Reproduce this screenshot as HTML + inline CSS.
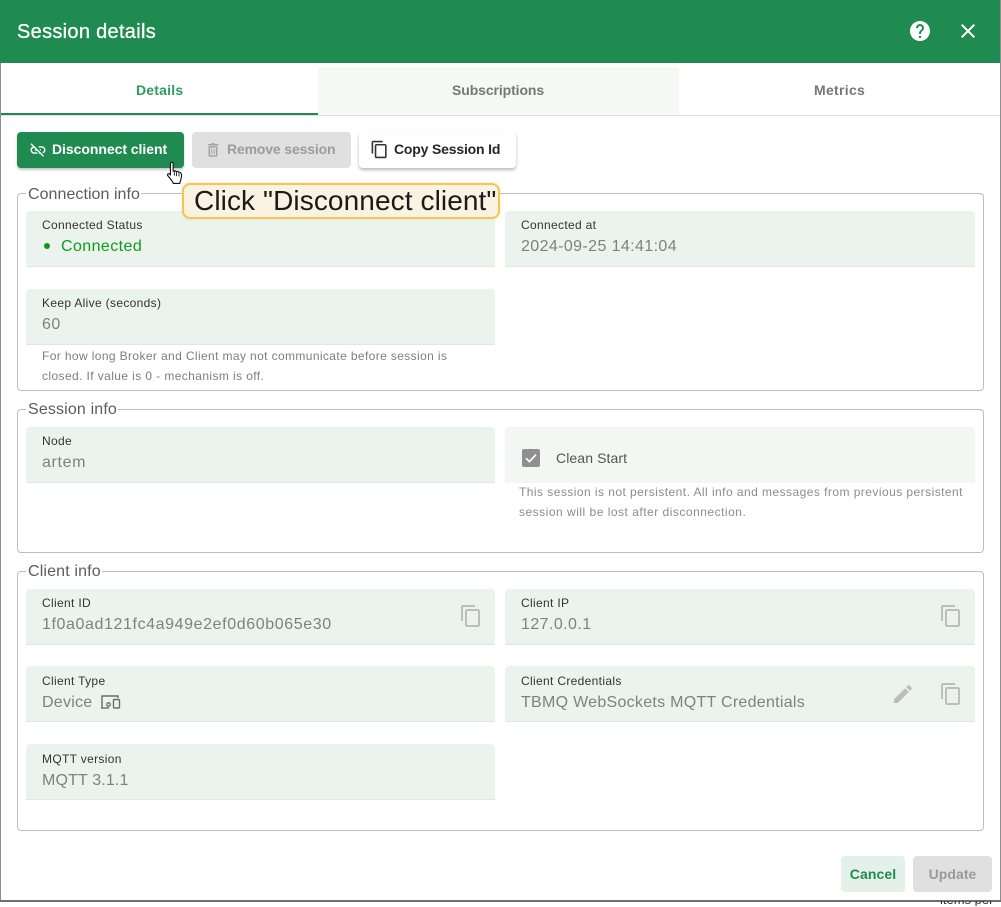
<!DOCTYPE html>
<html><head><meta charset="utf-8"><style>
*{box-sizing:border-box}
html,body{margin:0;padding:0;width:1001px;height:902px;overflow:hidden;background:#fff;font-family:"Liberation Sans",sans-serif}
.a{position:absolute}
.t{position:absolute;white-space:nowrap;line-height:1}
.box{position:absolute;border:1px solid #bdbdbd;border-radius:4px}
.leg{position:absolute;background:#fff;color:#5c5c5c;font-size:16px;line-height:18px;padding:0 1px 0 2px;white-space:nowrap}
.f{position:absolute;background:#ebf3ee;border-bottom:1px solid #dfe7e2;border-radius:4px 4px 0 0;height:56px}
.l{position:absolute;white-space:nowrap;font-size:12px;line-height:14px;color:#333;letter-spacing:.33px;margin-top:-1px}
.v{position:absolute;white-space:nowrap;font-size:16px;line-height:18px;color:#808080;letter-spacing:.45px;margin-top:1px}
.h{position:absolute;white-space:nowrap;font-size:12px;line-height:14px;color:#7e7e7e;letter-spacing:.42px}
.btn{position:absolute;border-radius:4px;height:36px;font-size:14px;font-weight:bold;line-height:36px;white-space:nowrap}
.btn span{top:-1px!important}
svg{position:absolute;display:block}
</style></head><body>
<div class="a" style="left:0;top:0;width:1001px;height:902px;background:#fff"></div>
<div class="a" style="left:0;top:0;width:1px;height:902px;background:#8e8e8e"></div>
<div class="a" style="left:1000px;top:0;width:1px;height:902px;background:#8e8e8e"></div>
<div class="a" style="left:0;top:900px;width:1001px;height:2px;background:#6f6f6f"></div>
<div class="t" style="left:940px;top:893px;font-size:13px;color:#333;clip-path:inset(8px 0 0 0)">items per</div>

<div class="a" style="left:0;top:0;width:1000px;height:63px;background:#208b50"></div>
<div class="t" style="left:17px;top:21px;font-size:20px;color:#fff;letter-spacing:.3px;line-height:22px;-webkit-text-stroke:.3px #fff">Session details</div>
<svg style="left:908px;top:19px" width="24" height="24" viewBox="0 0 24 24"><path fill="#fff" d="M12 2C6.48 2 2 6.48 2 12s4.48 10 10 10 10-4.48 10-10S17.52 2 12 2zm1 17h-2v-2h2v2zm2.07-7.75l-.9.92C13.45 12.9 13 13.5 13 15h-2v-.5c0-1.1.45-2.1 1.17-2.83l1.24-1.26c.37-.36.59-.86.59-1.41 0-1.1-.9-2-2-2s-2 .9-2 2H8c0-2.21 1.79-4 4-4s4 1.79 4 4c0 .88-.36 1.68-.93 2.25z"/></svg>
<svg style="left:956px;top:19px" width="24" height="24" viewBox="0 0 24 24"><path fill="#fff" d="M19 6.41L17.59 5 12 10.59 6.41 5 5 6.41 10.59 12 5 17.59 6.41 19 12 13.41 17.59 19 19 17.59 13.41 12z"/></svg>

<div class="a" style="left:318px;top:67px;width:361px;height:48px;background:#f4f9f6"></div>
<div class="a" style="left:1px;top:115px;width:999px;height:1px;background:#e0e0e0"></div>
<div class="a" style="left:1px;top:113px;width:317px;height:2px;background:#208b50"></div>
<div class="t" style="left:136px;top:83px;font-size:14px;font-weight:bold;color:#309a5f;letter-spacing:.2px">Details</div>
<div class="t" style="left:452px;top:83px;font-size:14px;font-weight:bold;color:#777;letter-spacing:-.1px">Subscriptions</div>
<div class="t" style="left:814px;top:83px;font-size:14px;font-weight:bold;color:#777;letter-spacing:.3px">Metrics</div>

<div class="btn" style="left:17px;top:132px;width:167px;background:#208b50;color:#fff;box-shadow:0 2px 2px rgba(0,0,0,.22)"><span class="a" style="left:35px;top:0;letter-spacing:-.05px">Disconnect client</span></div>
<svg style="left:29px;top:141px" width="18" height="18" viewBox="0 0 24 24"><path fill="#fff" d="M17 7h-4v1.9h4c1.71 0 3.1 1.39 3.1 3.1 0 1.43-.98 2.63-2.31 2.98l1.46 1.46C20.88 15.61 22 13.95 22 12c0-2.76-2.24-5-5-5zm-1 4h-2.19l2 2H16zM2 4.27l3.11 3.11C3.29 8.12 2 9.91 2 12c0 2.76 2.24 5 5 5h4v-1.9H7c-1.71 0-3.1-1.39-3.1-3.1 0-1.59 1.21-2.9 2.76-3.07L8.73 11H8v2h2.73L13 15.27V17h1.73l4.01 4L20 19.74 3.27 3 2 4.27z"/></svg>
<div class="btn" style="left:192px;top:132px;width:159px;background:#e0e0e0;color:#9c9c9c"><span class="a" style="left:35px;top:0;letter-spacing:-.15px">Remove session</span></div>
<svg style="left:204px;top:141px" width="18" height="18" viewBox="0 0 24 24"><path fill="#a3a3a3" d="M15 4l-1-1H10L9 4H5v2h14V4zM6 19c0 1.1.9 2 2 2h8c1.1 0 2-.9 2-2V7H6v12zm2-10h8v10H8V9zm1.500 1.500h1.500v7H9.500zm3.500 0h1.500v7H13z"/></svg>
<div class="btn" style="left:359px;top:132px;width:157px;background:#fff;color:#262626;box-shadow:0 2px 3px rgba(0,0,0,.28)"><span class="a" style="left:35px;top:0;letter-spacing:-.18px">Copy Session Id</span></div>
<svg style="left:370px;top:140px" width="19" height="19" viewBox="0 0 24 24"><path fill="#333" d="M16 1H4c-1.1 0-2 .9-2 2v14h2V3h12V1zm3 4H8c-1.1 0-2 .9-2 2v14c0 1.1.9 2 2 2h11c1.1 0 2-.9 2-2V7c0-1.1-.9-2-2-2zm0 16H8V7h11v14z"/></svg>

<div class="box" style="left:17px;top:193px;width:967px;height:198px"></div>
<div class="leg" style="left:26px;top:186px;letter-spacing:.05px">Connection info</div>
<div class="box" style="left:17px;top:409px;width:967px;height:144px"></div>
<div class="leg" style="left:26px;top:401px;letter-spacing:.15px">Session info</div>
<div class="box" style="left:17px;top:571px;width:967px;height:260px"></div>
<div class="leg" style="left:26px;top:563px;letter-spacing:.15px">Client info</div>

<div class="f" style="left:26px;top:211px;width:469px"></div>
<div class="l" style="left:42px;top:219px">Connected Status</div>
<div class="a" style="left:44px;top:243px;width:6px;height:6px;border-radius:50%;background:#0f9a16"></div>
<div class="v" style="left:61px;top:237px;color:#129a19;letter-spacing:.42px">Connected</div>
<div class="f" style="left:505px;top:211px;width:470px"></div>
<div class="l" style="left:521px;top:219px">Connected at</div>
<div class="v" style="left:521px;top:237px;letter-spacing:.39px">2024-09-25 14:41:04</div>
<div class="f" style="left:26px;top:289px;width:469px"></div>
<div class="l" style="left:42px;top:297px">Keep Alive (seconds)</div>
<div class="v" style="left:42px;top:315px">60</div>
<div class="h" style="left:42px;top:349px;letter-spacing:.38px">For how long Broker and Client may not communicate before session is</div>
<div class="h" style="left:42px;top:369px;letter-spacing:.4px">closed. If value is 0 - mechanism is off.</div>

<div class="f" style="left:26px;top:427px;width:469px"></div>
<div class="l" style="left:42px;top:435px">Node</div>
<div class="v" style="left:42px;top:453px;letter-spacing:.65px">artem</div>
<div class="a" style="left:505px;top:427px;width:470px;height:56px;background:#f2f7f4;border-radius:4px 4px 0 0"></div>
<div class="a" style="left:522px;top:449px;width:18px;height:18px;background:#8f8f8f;border-radius:2px"></div>
<svg style="left:522px;top:449px" width="18" height="18" viewBox="0 0 18 18"><path d="M4 9.200l3.400 3.400L14 5.600" fill="none" stroke="#fff" stroke-width="1.7"/></svg>
<div class="t" style="left:556px;top:450px;font-size:14px;line-height:16px;color:#555;letter-spacing:.1px">Clean Start</div>
<div class="h" style="left:519px;top:485px;letter-spacing:.45px;color:#8c8c8c">This session is not persistent. All info and messages from previous persistent</div>
<div class="h" style="left:519px;top:505px;letter-spacing:.5px;color:#8c8c8c">session will be lost after disconnection.</div>

<div class="f" style="left:26px;top:589px;width:469px"></div>
<div class="l" style="left:42px;top:597px">Client ID</div>
<div class="v" style="left:42px;top:615px;letter-spacing:.6px">1f0a0ad121fc4a949e2ef0d60b065e30</div>
<svg style="left:459px;top:604px" width="24" height="24" viewBox="0 0 24 24"><path fill="#bdbdbd" d="M16 1H4c-1.1 0-2 .9-2 2v14h2V3h12V1zm3 4H8c-1.1 0-2 .9-2 2v14c0 1.1.9 2 2 2h11c1.1 0 2-.9 2-2V7c0-1.1-.9-2-2-2zm0 16H8V7h11v14z"/></svg>
<div class="f" style="left:505px;top:589px;width:470px"></div>
<div class="l" style="left:521px;top:597px">Client IP</div>
<div class="v" style="left:521px;top:615px;letter-spacing:.42px">127.0.0.1</div>
<svg style="left:939px;top:604px" width="24" height="24" viewBox="0 0 24 24"><path fill="#bdbdbd" d="M16 1H4c-1.1 0-2 .9-2 2v14h2V3h12V1zm3 4H8c-1.1 0-2 .9-2 2v14c0 1.1.9 2 2 2h11c1.1 0 2-.9 2-2V7c0-1.1-.9-2-2-2zm0 16H8V7h11v14z"/></svg>

<div class="f" style="left:26px;top:666px;width:469px"></div>
<div class="l" style="left:42px;top:675px">Client Type</div>
<div class="v" style="left:42px;top:693px;letter-spacing:.25px">Device</div>
<svg style="left:100px;top:693px" width="21" height="18" viewBox="0 0 21 18"><path fill="none" stroke="#6d6d6d" stroke-width="1.400" d="M2 15V3h16v2"/><path fill="none" stroke="#6d6d6d" stroke-width="1.400" d="M1 15h8"/><circle cx="8.500" cy="11.500" r="1.800" fill="none" stroke="#6d6d6d" stroke-width="1.300"/><rect x="13.500" y="6.500" width="6" height="8.500" rx="1" fill="none" stroke="#6d6d6d" stroke-width="1.400"/></svg>
<div class="f" style="left:505px;top:666px;width:470px"></div>
<div class="l" style="left:521px;top:675px">Client Credentials</div>
<div class="v" style="left:521px;top:693px;letter-spacing:.28px">TBMQ WebSockets MQTT Credentials</div>
<svg style="left:891px;top:682px" width="24" height="24" viewBox="0 0 24 24"><path fill="#bdbdbd" d="M3 17.250V21h3.750L17.810 9.940l-3.750-3.750L3 17.250zM20.710 7.040c.39-.39.39-1.020 0-1.410l-2.340-2.340c-.39-.39-1.020-.39-1.410 0l-1.830 1.830 3.750 3.750 1.830-1.830z"/></svg>
<svg style="left:939px;top:682px" width="24" height="24" viewBox="0 0 24 24"><path fill="#bdbdbd" d="M16 1H4c-1.1 0-2 .9-2 2v14h2V3h12V1zm3 4H8c-1.1 0-2 .9-2 2v14c0 1.1.9 2 2 2h11c1.1 0 2-.9 2-2V7c0-1.1-.9-2-2-2zm0 16H8V7h11v14z"/></svg>

<div class="f" style="left:26px;top:744px;width:469px"></div>
<div class="l" style="left:42px;top:753px">MQTT version</div>
<div class="v" style="left:42px;top:771px;letter-spacing:.15px">MQTT 3.1.1</div>

<div class="btn" style="left:841px;top:856px;width:64px;background:#e4f1ea;color:#208b50;text-align:center;letter-spacing:.1px;line-height:36px">Cancel</div>
<div class="btn" style="left:913px;top:856px;width:79px;background:#e0e0e0;color:#9a9a9a;text-align:center;letter-spacing:.05px;line-height:36px">Update</div>

<div class="a" style="left:182px;top:183px;width:318px;height:36px;background:#fbf2e1;border:2px solid #f3c555;border-radius:8px;box-shadow:0 0 2px rgba(243,197,85,.5)"></div>
<div class="t" style="left:194px;top:186px;font-size:28px;line-height:30px;color:#1a1a1a;letter-spacing:.1px">Click "Disconnect client"</div>

<svg style="left:166px;top:161px" width="20" height="27" viewBox="0 0 18 24"><path fill="#fff" stroke="#111" stroke-width="1" stroke-linejoin="round" d="M4 2.200c0-1.500 2.400-1.500 2.400 0V9l1-.2c.9-.2 1.600.1 1.800.7.9-.4 1.800-.2 2.200.5 1-.3 2 .1 2.200 1 .6 1 .3 3.700-.3 5.700-.3 1.100-.7 2-.9 3.300H6.500c-.4-1.600-1.600-2.800-2.800-4.400L1.600 13c-.8-1.300.7-2.300 1.700-1.300L4 12.500z"/><path stroke="#111" stroke-width=".8" d="M7.500 9v4M9.500 10v3.500M11.700 10.800v3"/></svg>
</body></html>
